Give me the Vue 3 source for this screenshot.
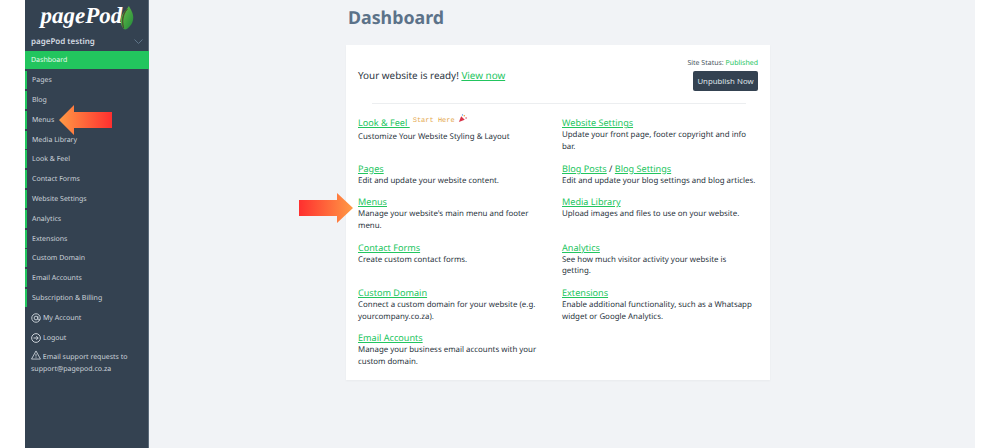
<script setup>
const navItems = ['Pages','Blog','Menus','Media Library','Look & Feel','Contact Forms','Website Settings','Analytics','Extensions','Custom Domain','Email Accounts','Subscription & Billing']
</script>

<template>
  <div class="page">
    <aside class="sidebar">
      <div class="logo">
        <span class="logo-text">pagePod</span>
        <svg class="leaf" width="14" height="25" viewBox="0 0 14 26">
          <defs><linearGradient id="lg" x1="0" y1="0" x2="1" y2="1"><stop offset="0" stop-color="#6fc04a"/><stop offset="1" stop-color="#1f8a3a"/></linearGradient></defs>
          <path d="M9 1C11 5 13.500 8 13.500 13C13.500 20 8 25 5 25.500C2 24 .5 20 .5 16C.5 9 6 6 9 1Z" fill="url(#lg)"/>
          <path d="M7.500 4C3 8 1 14 3.500 24C2 20 1.500 11 7.500 4Z" fill="#4a4a2a" stroke="#4a4a2a" stroke-width=".8"/>
        </svg>
      </div>
      <div class="site-row">
        <span>pagePod testing</span>
        <svg width="9" height="5" viewBox="0 0 9 5"><path d="M.5 .5L4.500 4.500L8.500 .5" fill="none" stroke="#5f7488" stroke-width="1"/></svg>
      </div>
      <div class="active-item">Dashboard</div>
      <ul class="nav">
        <li v-for="item in navItems" :key="item" class="nav-item">{{ item }}</li>
      </ul>
      <div class="plain-item">
        <svg width="10" height="10" viewBox="0 0 16 16" fill="none" stroke="#d5dbe1" stroke-width="1.400"><circle cx="8" cy="8" r="3"/><circle cx="8" cy="8" r="6.800"/><path d="M11 5V9.500C11 11.500 14 11.500 14.500 9.500"/></svg>
        <span>My Account</span>
      </div>
      <div class="plain-item">
        <svg width="10" height="10" viewBox="0 0 16 16" fill="none" stroke="#d5dbe1" stroke-width="1.500"><circle cx="8" cy="8" r="7"/><path d="M4 8H11.500M8.500 5L11.500 8L8.500 11"/></svg>
        <span>Logout</span>
      </div>
      <div class="support">
        <svg width="10" height="10" viewBox="0 0 16 16" fill="none" stroke="#d5dbe1" stroke-width="1.300"><path d="M8 1.500L15.200 14.500H.8Z"/><path d="M8 6V10.500M8 11.700V13"/></svg>
        Email support requests to support@pagepod.co.za
      </div>
    </aside>

    <main class="main">
      <div class="content">
        <h1 class="title">Dashboard</h1>
        <section class="card">
          <header class="card-head">
            <p class="ready">Your website is ready! <a class="link">View now</a></p>
            <div class="status">
              <p class="status-text">Site Status: <span class="published">Published</span></p>
              <button class="btn">Unpublish Now</button>
            </div>
          </header>
          <hr class="rule" />
          <div class="grid">
            <div class="cell">
              <div class="cell-title"><a class="link">Look &amp; Feel </a><span class="start">Start Here</span><svg class="popper" width="9" height="9" viewBox="0 0 10 10"><path d="M1 9L3.500 2.500L7.500 6.500Z" fill="#d8344a"/><circle cx="7" cy="2" r=".9" fill="#e8a33d"/><circle cx="9" cy="4.500" r=".8" fill="#d8344a"/><circle cx="5" cy="1" r=".7" fill="#4a8fd8"/></svg></div>
              <p>Customize Your Website Styling &amp; Layout</p>
            </div>
            <div class="cell">
              <div class="cell-title"><a class="link">Website Settings</a></div>
              <p>Update your front page, footer copyright and info bar.</p>
            </div>
            <div class="cell">
              <div class="cell-title"><a class="link">Pages</a></div>
              <p>Edit and update your website content.</p>
            </div>
            <div class="cell">
              <div class="cell-title"><a class="link">Blog Posts</a> / <a class="link">Blog Settings</a></div>
              <p>Edit and update your blog settings and blog articles.</p>
            </div>
            <div class="cell">
              <div class="cell-title"><a class="link">Menus</a></div>
              <p>Manage your website's main menu and footer menu.</p>
            </div>
            <div class="cell">
              <div class="cell-title"><a class="link">Media Library</a></div>
              <p>Upload images and files to use on your website.</p>
            </div>
            <div class="cell">
              <div class="cell-title"><a class="link">Contact Forms</a></div>
              <p>Create custom contact forms.</p>
            </div>
            <div class="cell">
              <div class="cell-title"><a class="link">Analytics</a></div>
              <p>See how much visitor activity your website is getting.</p>
            </div>
            <div class="cell">
              <div class="cell-title"><a class="link">Custom Domain</a></div>
              <p>Connect a custom domain for your website (e.g. yourcompany.co.za).</p>
            </div>
            <div class="cell">
              <div class="cell-title"><a class="link">Extensions</a></div>
              <p>Enable additional functionality, such as a Whatsapp widget or Google Analytics.</p>
            </div>
            <div class="cell">
              <div class="cell-title"><a class="link">Email Accounts</a></div>
              <p>Manage your business email accounts with your custom domain.</p>
            </div>
          </div>
        </section>
      </div>
    </main>

    <svg class="arrow arrow-left" width="53" height="30" viewBox="0 0 53 30">
      <defs><linearGradient id="a1" x1="0" x2="1" y1="0" y2="0"><stop offset="0" stop-color="#ff9a45"/><stop offset="1" stop-color="#ff2f2f"/></linearGradient></defs>
      <path d="M0 15L15 0V7H53V23H15V30Z" fill="url(#a1)"/>
    </svg>
    <svg class="arrow arrow-right" width="54" height="30" viewBox="0 0 54 30">
      <defs><linearGradient id="a2" x1="0" x2="1" y1="0" y2="0"><stop offset="0" stop-color="#ff2f2f"/><stop offset="1" stop-color="#ff9a45"/></linearGradient></defs>
      <path d="M54 15L38 0V7H0V23H38V30Z" fill="url(#a2)"/>
    </svg>
  </div>
</template>

<style scoped>
.page {
  position: relative;
  display: flex;
  height: 448px;
  padding: 0 25px;
  box-sizing: border-box;
  overflow: hidden;
  background: #fff;
  font-family: "Noto Sans", sans-serif;
  text-rendering: geometricPrecision;
}
.sidebar {
  width: 124px;
  flex: none;
  background: #344251;
  box-shadow: inset -1px 0 #5b6b7a;
  box-sizing: border-box;
  color: #ccd3da;
  font-size: 7px;
}
.logo {
  height: 32px;
  display: flex;
  align-items: flex-start;
  justify-content: center;
  padding-left: 1px;
}
.logo-text {
  font-family: "Liberation Serif", serif;
  font-style: italic;
  font-weight: 700;
  font-size: 23px;
  line-height: 31px;
  color: #fff;
}
.leaf { margin: 5px 0 0 -2px; }
.site-row {
  height: 19px;
  display: flex;
  align-items: center;
  justify-content: space-between;
  padding: 0 6px;
  font-size: 8px;
  font-weight: 600;
  color: #d5dbe1;
}
.active-item {
  height: 18px;
  line-height: 20px;
  padding-left: 6px;
  background: #22c55e;
  color: #eafbf0;
  font-size: 7px;
}
.nav {
  list-style: none;
  margin: 2.300px 0 0;
  padding: 0;
}
.nav-item {
  height: 18px;
  line-height: 20.500px;
  margin-bottom: 1.800px;
  padding-left: 5px;
  border-left: 2px solid #22c55e;
}
.plain-item {
  height: 18px;
  margin-bottom: 1.800px;
  padding: 1px 0 0 6px;
  box-sizing: border-box;
  display: flex;
  align-items: center;
  gap: 2px;
}
.support {
  padding: 2px 6px 0;
  line-height: 11.500px;
}
.support svg { vertical-align: -1px; }
.main {
  flex: 1;
  background: #f1f3f6;
  min-width: 0;
}
.content {
  width: 424px;
  margin-left: 197px;
}
.title {
  margin: 0;
  padding: 5.500px 0 0 2px;
  height: 45px;
  box-sizing: border-box;
  font-size: 17.800px;
  line-height: 25px;
  font-weight: 700;
  color: #5c7289;
}
.card {
  height: 335px;
  box-sizing: border-box;
  background: #fff;
  padding: 12px 12px 0;
  box-shadow: 0 1px 2px rgba(0,0,0,.04);
}
.card-head {
  display: flex;
  justify-content: space-between;
  height: 46px;
}
.ready {
  margin: 11px 0 0;
  font-size: 9.900px;
  line-height: 14px;
  color: #2a3440;
}
.link {
  color: #22c55e;
  text-decoration: underline;
}
.status {
  display: flex;
  flex-direction: column;
  align-items: flex-end;
}
.status-text {
  margin: 1.500px 0 2.500px;
  font-size: 7px;
  line-height: 10px;
  color: #4a5560;
}
.published { color: #22c55e; }
.btn {
  width: 65px;
  height: 20px;
  padding: 0;
  border: none;
  border-radius: 2px;
  background: #344251;
  color: #dfe4e9;
  font-family: inherit;
  font-size: 7.800px;
}
.rule {
  margin: 0 12px 0 14px;
  border: none;
  border-top: 1px solid #eceef0;
}
.grid {
  display: grid;
  grid-template-columns: 192px 194.500px;
  column-gap: 12px;
  margin-top: 13.400px;
}
.cell { padding-bottom: 9.300px; }
.cell-title {
  font-size: 9.100px;
  line-height: 12px;
  color: #2a3440;
  white-space: nowrap;
}
.start {
  position: relative;
  top: -4px;
  margin-left: 3px;
  font-family: "Liberation Mono", monospace;
  font-size: 7px;
  color: #e5a94f;
}
.popper { position: relative; top: -3px; margin-left: 3px; }
.cell p {
  margin: 1px 0 0;
  font-size: 7.900px;
  line-height: 11.500px;
  color: #2a3440;
}
.arrow { position: absolute; }
.arrow-left { left: 59px; top: 105px; }
.arrow-right { left: 299px; top: 193px; }
</style>
